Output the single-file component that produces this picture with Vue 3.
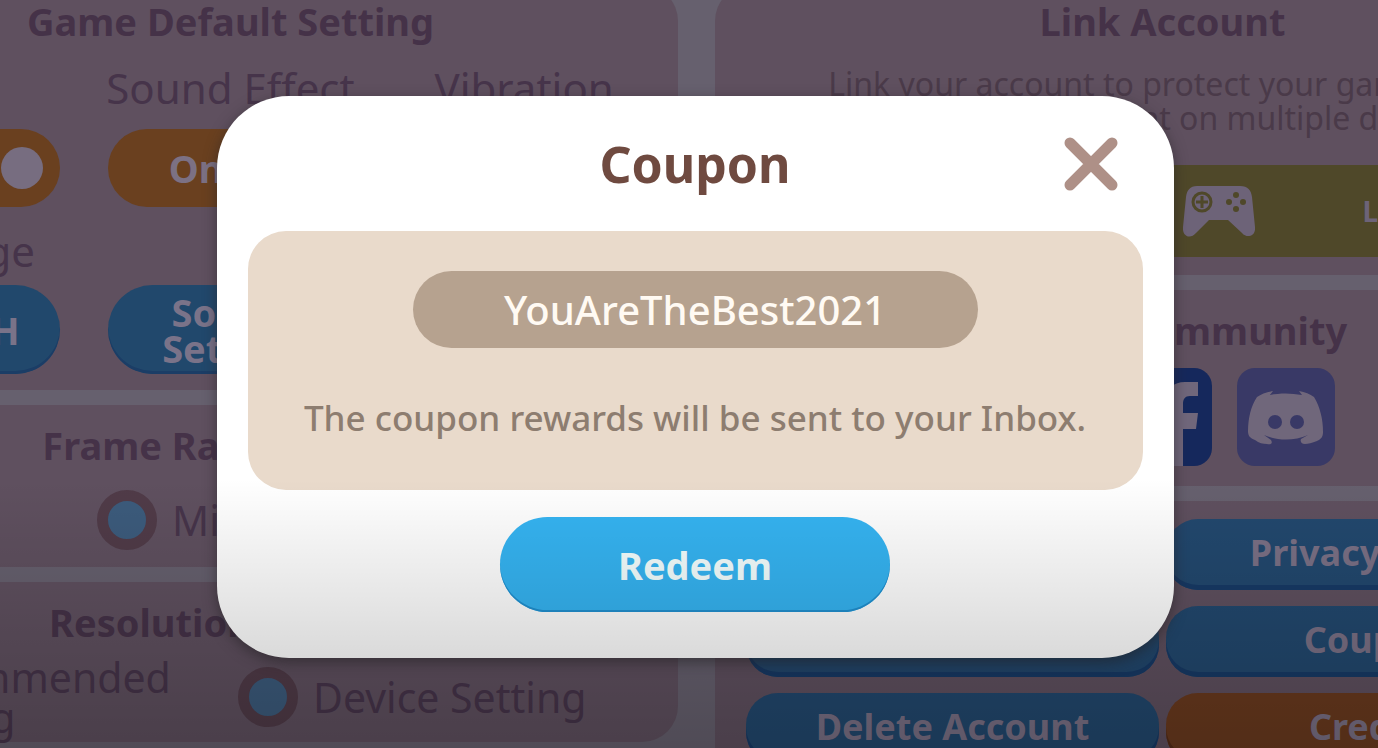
<script setup>
import { ref } from 'vue'

const couponCode = ref('YouAreTheBest2021')
const frameRate = ref('')
const resolution = ref('')

const toggles = ref([
    { label: 'Music', on: true },
    { label: 'Sound Effect', on: true },
    { label: 'Vibration', on: true },
])

const links = [
    { label: 'Terms of Service' },
    { label: 'Privacy Policy' },
    { label: 'Notices' },
    { label: 'Coupon' },
    { label: 'Delete Account' },
    { label: 'Credits', accent: true },
]
</script>

<template>
    <div class="screen">
        <!-- ── Settings ─────────────────────────────────────────────── -->
        <main class="board">
            <div class="board__col">
                <section class="panel panel--game">
                    <h2 class="panel__title">Game Default Setting</h2>
                    <div class="settings">
                        <div v-for="t in toggles" :key="t.label" class="setting">
                            <span class="setting__label">{{ t.label }}</span>
                            <button class="toggle" role="switch" :aria-checked="t.on" :aria-label="t.label" @click="t.on = !t.on">
                                <span>{{ t.on ? 'On' : 'Off' }}</span>
                                <span class="toggle__knob"></span>
                            </button>
                        </div>
                    </div>
                    <div class="settings settings--second">
                        <div class="setting">
                            <span class="setting__label">Language</span>
                            <button class="pill-btn">ENGLISH</button>
                        </div>
                        <div class="setting setting--bottom">
                            <button class="pill-btn">Sound<br>Setting</button>
                        </div>
                    </div>
                </section>

                <section class="panel panel--options">
                    <h2 class="panel__title panel__title--left">Frame Rate</h2>
                    <div class="options options--rate">
                        <label class="option"><input v-model="frameRate" type="radio" name="rate" value="low"><span>Low</span></label>
                        <label class="option"><input v-model="frameRate" type="radio" name="rate" value="mid"><span>Mid</span></label>
                    </div>
                </section>

                <section class="panel panel--options">
                    <h2 class="panel__title panel__title--left">Resolution</h2>
                    <div class="options options--resolution">
                        <label class="option"><input v-model="resolution" type="radio" name="res" value="rec"><span>Recommended<br>Setting</span></label>
                        <label class="option"><input v-model="resolution" type="radio" name="res" value="dev"><span>Device Setting</span></label>
                    </div>
                </section>
            </div>

            <div class="board__col">
                <section class="panel panel--account">
                    <h2 class="panel__title">Link Account</h2>
                    <p class="panel__text">
                        Link your account to protect your game data<br>
                        and use your account on multiple devices.
                    </p>
                    <button class="link-btn">
                        <svg class="link-btn__icon" viewBox="0 0 72 52" aria-hidden="true">
                            <path fill="currentColor" d="M14 1h43c8 0 11 4 12 11l3 30c1 9-8 12-13 6L45 35H26L13 48C7 55-1 51 0 42L3 12C4 5 7 1 14 1z" />
                            <circle cx="19" cy="17" r="9" fill="none" stroke="#4f4829" stroke-width="3" />
                            <path d="M19 11v12M13 17h12" stroke="#4f4829" stroke-width="3" />
                            <g fill="#4f4829">
                                <circle cx="53" cy="10" r="3" />
                                <circle cx="53" cy="24" r="3" />
                                <circle cx="46" cy="17" r="3" />
                                <circle cx="60" cy="17" r="3" />
                            </g>
                        </svg>
                        <span class="link-btn__label">Link</span>
                    </button>
                </section>

                <section class="panel panel--community">
                    <h2 class="panel__title panel__title--right">Community</h2>
                    <div class="socials">
                        <a href="#" class="social social--facebook" aria-label="Facebook">
                            <svg viewBox="0 0 98 98" aria-hidden="true">
                                <path fill="currentColor" d="M54 98V61H38V45h16V33c0-13 5-19 17-19h13v14h-8c-5 0-7 3-7 8v9h15l-2 16H69v37z" />
                            </svg>
                        </a>
                        <a href="#" class="social social--discord" aria-label="Discord">
                            <svg viewBox="0 0 98 98" aria-hidden="true">
                                <path fill="currentColor" d="M36 23l-3 4c10-2 21-2 32 0l-3-4c6 1 11 3 15 6 6 10 9 22 9 35 0 5-2 7-6 9-5 2-9 3-12 3-4 0-5-3-4-5l7-4c-14 6-30 6-44 0l7 5c2 3 0 5-4 4-4 0-8-1-12-4-5-2-7-4-7-9 0-13 3-25 9-34 4-3 9-5 16-6z" />
                                <circle cx="38" cy="54" r="7" fill="#393966" />
                                <circle cx="60" cy="54" r="7" fill="#393966" />
                            </svg>
                        </a>
                    </div>
                </section>

                <section class="panel panel--links">
                    <button
                        v-for="l in links"
                        :key="l.label"
                        :class="['menu-btn', { 'menu-btn--accent': l.accent }]"
                    >{{ l.label }}</button>
                </section>
            </div>
        </main>

        <!-- ── Coupon dialog ────────────────────────────────────────── -->
        <div class="overlay">
            <form class="modal" role="dialog" aria-labelledby="coupon-title" @submit.prevent>
                <header class="modal__header">
                    <h1 id="coupon-title" class="modal__title">Coupon</h1>
                    <button type="button" class="modal__close" aria-label="Close">
                        <svg viewBox="0 0 54 54" aria-hidden="true">
                            <path d="M6 6l42 42M48 6L6 48" stroke="currentColor" stroke-width="11" stroke-linecap="round" />
                        </svg>
                    </button>
                </header>
                <div class="modal__body">
                    <input v-model="couponCode" class="modal__input" type="text" aria-label="Coupon code">
                    <p class="modal__hint">The coupon rewards will be sent to your Inbox.</p>
                </div>
                <button type="submit" class="modal__submit">Redeem</button>
            </form>
        </div>

        <div class="shade"></div>
    </div>
</template>

<style>
body {
    overflow: hidden;
    background: #64606d;
}
</style>

<style scoped>
.screen {
    position: relative;
    height: 100vh;
    overflow: hidden;
    background: #66606e;
    color: #46344a;
    font-family: "Noto Sans", "Open Sans", sans-serif;
}

button {
    border: none;
    padding: 0;
    font-family: inherit;
    font-weight: 700;
    cursor: pointer;
}

h1,
h2,
p {
    margin: 0;
}

/* ── Settings board ───────────────────────────────────────────────────── */
.board {
    display: grid;
    grid-template-columns: 1fr 1fr;
    gap: 37px;
    width: calc(100% + 449px);
    margin: -15px 0 0 -217px;
}

.board__col {
    display: flex;
    flex-direction: column;
    gap: 15px;
    min-width: 0;
}

.panel {
    border-radius: 36px;
    background: #5f505f;
}

.panel__title {
    font-size: 38px;
    line-height: 40px;
    text-align: center;
    color: #453248;
}

.panel__title--left {
    padding-right: 160px;
}

.panel__title--right {
    padding-left: 148px;
}

.panel__text {
    margin-top: 26px;
    font-size: 32px;
    line-height: 34px;
    text-align: center;
    white-space: nowrap;
    color: #4a3a49;
}

/* ── Game settings ────────────────────────────────────────────────────── */
.panel--game {
    padding: 16px 31px;
}

.settings {
    display: grid;
    grid-template-columns: repeat(3, minmax(0, 1fr));
    gap: 48px;
    margin-top: 25px;
}

.settings--second {
    margin-top: 22px;
}

.setting {
    display: flex;
    flex-direction: column;
    align-items: center;
    gap: 19px;
}

.settings--second .setting {
    gap: 12px;
}

.setting--bottom {
    justify-content: flex-end;
}

.setting__label {
    font-size: 42px;
    line-height: 44px;
    white-space: nowrap;
}

.toggle {
    display: flex;
    align-items: center;
    justify-content: space-between;
    width: 100%;
    height: 78px;
    padding: 0 17px 0 61px;
    border-radius: 39px;
    background: #6a401f;
    color: #7c7184;
    font-size: 38px;
}

.toggle__knob {
    width: 42px;
    height: 42px;
    border-radius: 50%;
    background: #776d80;
}

.pill-btn {
    width: 100%;
    height: 89px;
    border-radius: 45px;
    background: #21486c;
    box-shadow: inset 0 -3px 0 #1b3d66;
    color: #7a7389;
    font-size: 38px;
    line-height: 36px;
}

/* ── Radio options ────────────────────────────────────────────────────── */
.panel--options {
    padding: 20px 0 0 59px;
}

.panel--options .panel__title {
    margin-left: -59px;
}

.options {
    display: flex;
    align-items: center;
}

.options--rate {
    padding: 25px 0 17px;
}

.options--resolution {
    margin-left: -38px;
    padding: 15px 0 5px;
}

.option {
    display: flex;
    align-items: center;
    gap: 15px;
    width: 434px;
    font-size: 41px;
    line-height: 40px;
    white-space: nowrap;
}

.options--rate .option {
    width: 255px;
}

.option input {
    flex-shrink: 0;
    width: 60px;
    height: 60px;
    margin: 0;
    appearance: none;
    border: 11px solid #503b48;
    border-radius: 50%;
    background: #3c5b7c;
}

/* ── Link account ─────────────────────────────────────────────────────── */
.panel--account {
    display: flex;
    flex-direction: column;
    padding: 16px 31px 18px;
}

.link-btn {
    display: flex;
    align-items: center;
    gap: 108px;
    align-self: flex-end;
    width: 50%;
    height: 92px;
    margin-top: 30px;
    padding-left: 20px;
    background: #4f4829;
    color: #6d6378;
    font-size: 28px;
}

.link-btn__icon {
    width: 72px;
    height: 52px;
}

/* ── Community ────────────────────────────────────────────────────────── */
.panel--community {
    padding: 20px 0;
}

.socials {
    display: flex;
    gap: 25px;
    justify-content: center;
    padding: 18px 0 0 123px;
}

.social {
    width: 98px;
    height: 98px;
    overflow: hidden;
    border-radius: 18px;
    color: #70677b;
}

.social--facebook {
    background: #15285c;
}

.social--discord {
    background: #393966;
}

.social svg {
    display: block;
}

/* ── Menu buttons ─────────────────────────────────────────────────────── */
.panel--links {
    display: grid;
    grid-template-columns: 1fr 1fr;
    gap: 16px 7px;
    padding: 18px 31px;
}

.menu-btn {
    height: 71px;
    padding-bottom: 4px;
    border-radius: 32px;
    background: #22486e;
    box-shadow: inset 0 -5px 0 #173a66;
    color: #7a7085;
    font-size: 36px;
}

.menu-btn--accent {
    background: #6a3a1e;
    box-shadow: inset 0 -5px 0 #542c18;
}

/* ── Dialog ───────────────────────────────────────────────────────────── */
.overlay {
    position: absolute;
    inset: 0;
    display: flex;
    align-items: center;
    justify-content: center;
    padding: 6px 0 0 12px;
}

.modal {
    display: flex;
    flex-direction: column;
    box-sizing: border-box;
    width: calc(100% - 48px);
    max-width: 957px;
    padding: 0 31px 46px;
    border-radius: 72px;
    background: #fff;
    box-shadow: 0 4px 14px rgba(40, 36, 40, 0.6);
}

.modal__header {
    display: grid;
    grid-template-columns: 54px 1fr 54px;
    align-items: center;
    height: 135px;
    padding: 0 25px;
}

.modal__title {
    grid-column: 2;
    font-size: 50px;
    line-height: 60px;
    text-align: center;
    color: #6f4a40;
}

.modal__close {
    width: 54px;
    height: 54px;
    background: none;
    color: #ae9087;
}

.modal__close svg {
    display: block;
}

.modal__body {
    padding: 40px 40px 48px;
    border-radius: 38px;
    background: #e9dacb;
    text-align: center;
}

.modal__input {
    box-sizing: border-box;
    width: 100%;
    max-width: 565px;
    height: 77px;
    border: none;
    border-radius: 39px;
    background: #b6a28f;
    color: #fffaf3;
    font: 500 40px/44px "Noto Sans", "Open Sans", sans-serif;
    text-align: center;
}

.modal__hint {
    margin-top: 46px;
    font-size: 35px;
    font-weight: 500;
    line-height: 48px;
    color: #8d7d70;
}

.modal__submit {
    align-self: center;
    width: 390px;
    height: 95px;
    margin-top: 27px;
    border-radius: 48px;
    background: #35b4f2;
    box-shadow: inset 0 -2px 0 #2090d0;
    color: #f4ffff;
    font-size: 38px;
}

/* Darkens the lower part of the whole screen */
.shade {
    position: absolute;
    inset: 60% 0 0;
    background: linear-gradient(transparent 10%, rgba(0, 0, 0, 0.22));
    pointer-events: none;
}
</style>
